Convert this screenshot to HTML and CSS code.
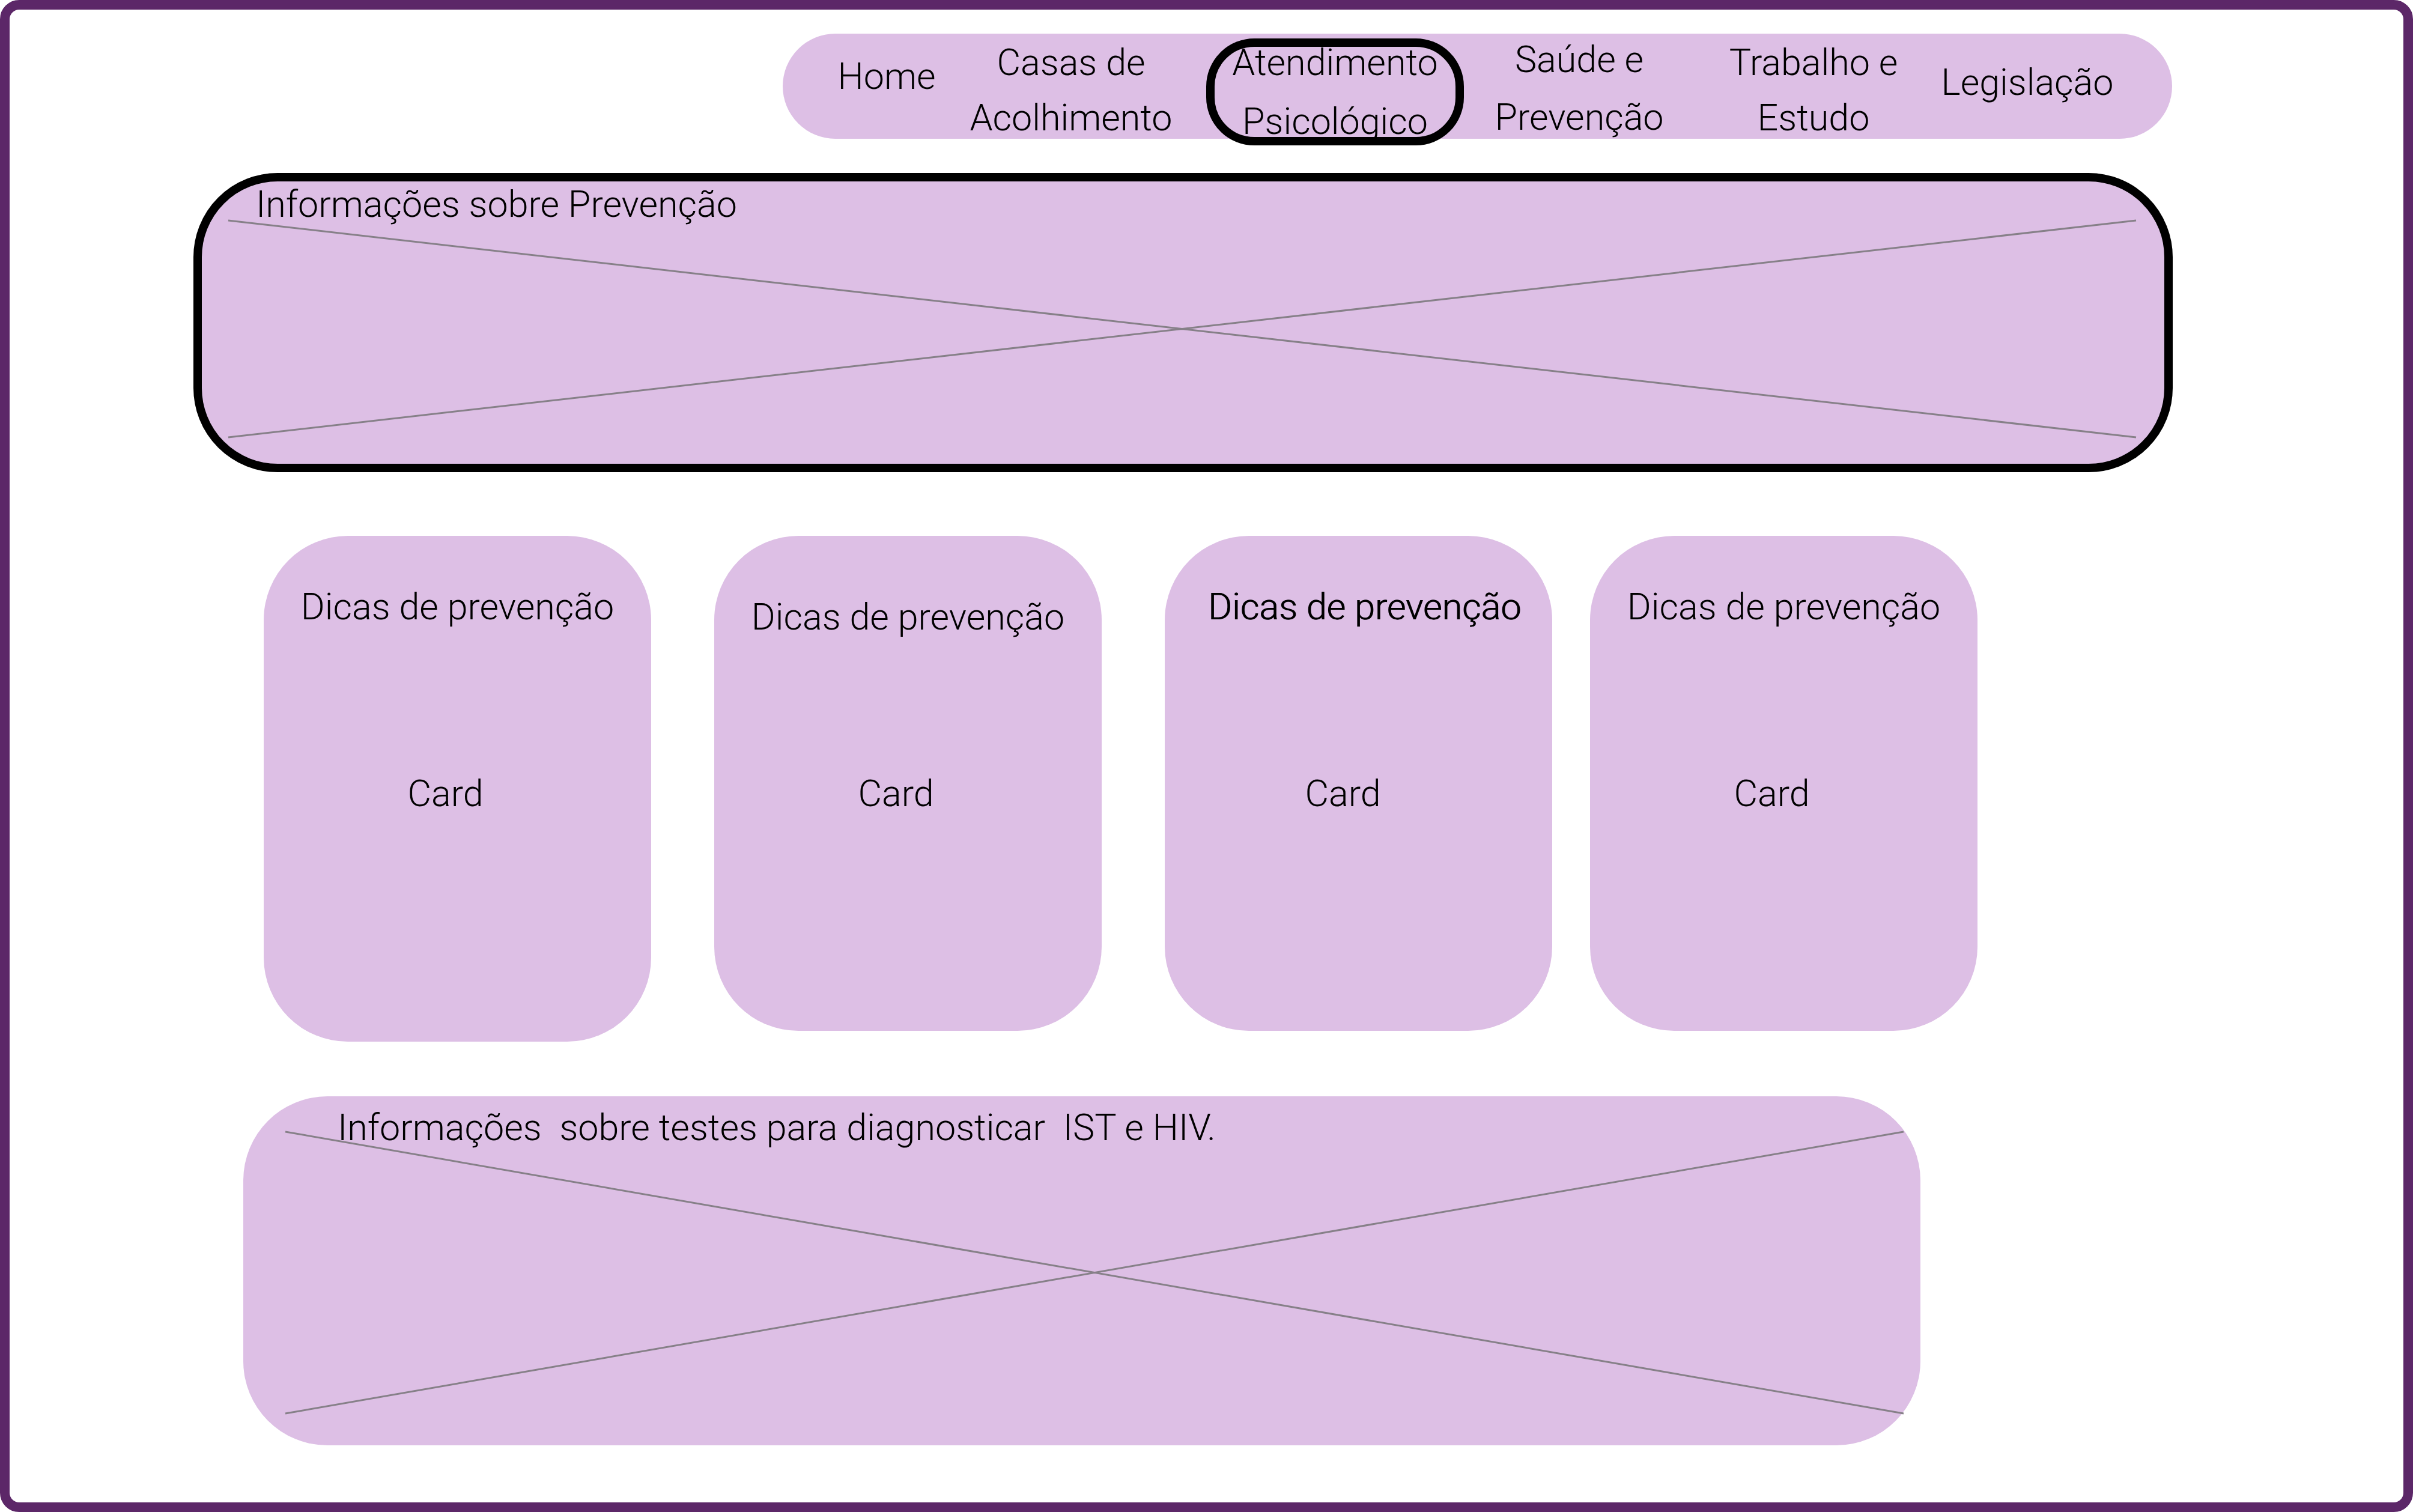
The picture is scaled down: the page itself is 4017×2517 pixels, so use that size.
FILE: index.html
```html
<!DOCTYPE html>
<html lang="pt-BR">
<head>
<meta charset="utf-8">
<meta name="viewport" content="width=device-width, initial-scale=1">
<title>Saúde e Prevenção</title>
<link rel="stylesheet" href="styles.css">
</head>
<body>
<div class="frame">
  <header class="row row-nav">
    <nav class="nav">
      <a class="nav-link nav-home" href="#">Home</a>
      <a class="nav-link nav-shelter" href="#">Casas de<br>Acolhimento</a>
      <a class="nav-link nav-current" href="#" aria-current="page">Atendimento<br>Psicológico</a>
      <a class="nav-link nav-health" href="#">Saúde e<br>Prevenção</a>
      <a class="nav-link nav-work" href="#">Trabalho e<br>Estudo</a>
      <a class="nav-link nav-law" href="#">Legislação</a>
    </nav>
  </header>
  <main>
    <div class="row row-hero">
      <section class="panel hero">
        <svg class="cross" viewBox="0 0 100 100" preserveAspectRatio="none" aria-hidden="true"><path d="M0 0L100 100M0 100L100 0"/></svg>
        <h1 class="panel-title">Informações sobre Prevenção</h1>
      </section>
    </div>
    <div class="row row-cards">
      <article class="card card-1"><h2 class="card-title">Dicas de prevenção</h2><p class="card-text">Card</p></article>
      <article class="card card-2"><h2 class="card-title">Dicas de prevenção</h2><p class="card-text">Card</p></article>
      <article class="card card-3"><h2 class="card-title">Dicas de prevenção</h2><p class="card-text">Card</p></article>
      <article class="card card-4"><h2 class="card-title">Dicas de prevenção</h2><p class="card-text">Card</p></article>
    </div>
    <div class="row row-tests">
      <section class="panel tests">
        <svg class="cross" viewBox="0 0 100 100" preserveAspectRatio="none" aria-hidden="true"><path d="M0 0L100 100M0 100L100 0"/></svg>
        <h2 class="panel-title">Informações&nbsp; sobre testes para diagnosticar&nbsp; IST e HIV.</h2>
      </section>
    </div>
  </main>
</div>
</body>
</html>
```

FILE: styles.css
```css
* { box-sizing: border-box; }

body {
  margin: 0;
  background: #fff;
  color: #000;
  font-family: Roboto, "Open Sans", sans-serif;
  font-size: 61px;
  font-weight: 300;
  line-height: 92px;
}

h1, h2, p { margin: 0; font-size: inherit; font-weight: inherit; }

.frame {
  min-height: 100vh;
  padding: 40px 0 95px;
  border: 16px solid #5c2768;
  border-radius: 32px;
}

.row { display: grid; }
.row > * { grid-column: 2; }
.row-nav { grid-template-columns: 1287fr 2313fr 385fr; }
.row-hero { grid-template-columns: 306fr 3295fr 384fr; margin-top: 57px; }
.row-cards {
  grid-template-columns: 423fr 645fr 105fr 645fr 105fr 645fr 63fr 645fr 709fr;
  align-items: start;
  margin-top: 106px;
}
.row-tests { grid-template-columns: 389fr 2792fr 804fr; margin-top: 91px; }

/* Navigation */
.nav {
  display: grid;
  grid-template-columns:
    98fr minmax(0, 150fr) 62fr minmax(0, 340fr) 55fr minmax(0, 429fr) 47fr
    minmax(0, 290fr) 95fr minmax(0, 300fr) 61fr minmax(0, 290fr) 96fr;
  align-items: start;
  height: 175px;
  padding-top: 2px;
  border-radius: 88px;
  background: #ddbfe5;
}
.nav-link {
  display: flex;
  justify-content: center;
  color: inherit;
  text-align: center;
  text-decoration: none;
  white-space: nowrap;
}
.nav-home { grid-column: 2; margin-top: 23px; }
.nav-shelter { grid-column: 4; }
.nav-current {
  grid-column: 6;
  align-items: center;
  height: 178px;
  margin-top: 6px;
  border: 14px solid #000;
  border-radius: 80px;
  line-height: 98px;
}
.nav-health { grid-column: 8; margin-top: -7px; line-height: 96px; }
.nav-work { grid-column: 10; }
.nav-law { grid-column: 12; margin-top: 33px; }

/* Wide panels with a crossed placeholder */
.panel {
  position: relative;
  border-radius: 140px;
  background: #ddbfe5;
}
.panel-title { position: relative; white-space: nowrap; }
.hero {
  min-height: 498px;
  padding-left: 90px;
  border: 14px solid #000;
  line-height: 76px;
}
.tests { min-height: 581px; padding: 6px 0 0 157px; }
.cross { position: absolute; overflow: visible; }
.cross path {
  fill: none;
  stroke: #868088;
  stroke-width: 3px;
  vector-effect: non-scaling-stroke;
}
.hero .cross { left: 44px; top: 65px; width: calc(100% - 91px); height: 361px; }
.tests .cross { left: 70px; top: 59px; width: calc(100% - 98px); height: 469px; }

/* Cards */
.card {
  grid-row: 1;
  min-height: 824px;
  padding: 72px 0 0;
  border-radius: 140px;
  background: #ddbfe5;
  text-align: center;
}
.card-title { white-space: nowrap; }
.card-text { margin-top: 219px; padding-right: 40px; }
.card-1 { grid-column: 2; min-height: 842px; }
.card-2 { grid-column: 4; padding-top: 89px; }
.card-2 .card-text { margin-top: 202px; }
.card-3 { grid-column: 6; }
.card-3 .card-title { padding-left: 20px; text-shadow: 1px 0 #000; }
.card-3 .card-text { padding-right: 52px; }
.card-4 { grid-column: 8; }
```
